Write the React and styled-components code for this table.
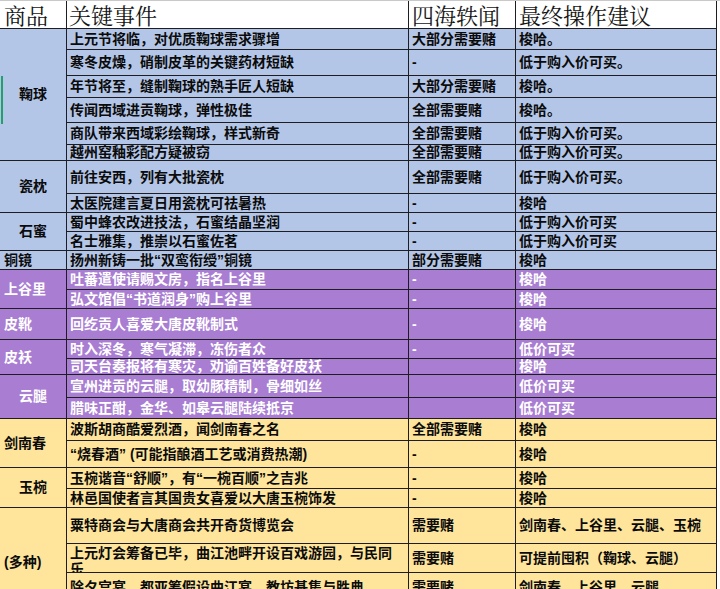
import React from "react";
import styled, { createGlobalStyle } from "styled-components";

const GlobalStyle = createGlobalStyle`
  html, body {
    margin: 0;
    padding: 0;
    background: #ffffff;
    overflow: hidden;
  }
  body {
    font-family: "Liberation Sans", "Noto Sans CJK SC", sans-serif;
  }
`;

const tones = {
  blue: { bg: "#b4c6e7", fg: "#0b0b0b" },
  purple: { bg: "#a87dd2", fg: "#ffffff" },
  yellow: { bg: "#fee59b", fg: "#0b0b0b" },
};

// [事件, 轶闻, 建议, 行高, 排版]
const groups = [
  {
    name: "鞠球",
    tone: "blue",
    center: true,
    rows: [
      ["上元节将临，对优质鞠球需求骤增", "大部分需要赌", "梭哈。", 21],
      ["寒冬皮燥，硝制皮革的关键药材短缺", "-", "低于购入价可买。", 26],
      ["年节将至，缝制鞠球的熟手匠人短缺", "大部分需要赌", "梭哈。", 22],
      ["传闻西域进贡鞠球，弹性极佳", "全部需要赌", "梭哈。", 25],
      ["商队带来西域彩绘鞠球，样式新奇", "全部需要赌", "低于购入价可买。", 22],
      ["越州窑釉彩配方疑被窃", "全部需要赌", "低于购入价可买。", 16],
    ],
  },
  {
    name: "瓷枕",
    tone: "blue",
    center: true,
    rows: [
      ["前往安西，列有大批瓷枕", "全部需要赌", "低于购入价可买。", 33],
      ["太医院建言夏日用瓷枕可祛暑热", "-", "梭哈", 19],
    ],
  },
  {
    name: "石蜜",
    tone: "blue",
    center: true,
    rows: [
      ["蜀中蜂农改进技法，石蜜结晶坚润", "-", "低于购入价可买", 19],
      ["名士雅集，推崇以石蜜佐茗", "-", "低于购入价可买", 19],
    ],
  },
  {
    name: "铜镜",
    tone: "blue",
    rows: [["扬州新铸一批“双鸾衔绶”铜镜", "部分需要赌", "梭哈", 19]],
  },
  {
    name: "上谷里",
    tone: "purple",
    rows: [
      ["吐蕃遣使请赐文房，指名上谷里", "-", "梭哈", 20],
      ["弘文馆倡“书道润身”购上谷里", "-", "梭哈", 19],
    ],
  },
  {
    name: "皮靴",
    tone: "purple",
    rows: [["回纥贡人喜爱大唐皮靴制式", "-", "梭哈", 31]],
  },
  {
    name: "皮袄",
    tone: "purple",
    rows: [
      ["时入深冬，寒气凝滞，冻伤者众", "-", "低价可买", 19],
      ["司天台奏报将有寒灾，劝谕百姓备好皮袄", "", "梭哈", 16],
    ],
  },
  {
    name: "云腿",
    tone: "purple",
    center: true,
    rows: [
      ["宣州进贡的云腿，取幼豚精制，骨细如丝", "", "低价可买", 23],
      ["腊味正酣，金华、如皋云腿陆续抵京", "", "低价可买", 21],
    ],
  },
  {
    name: "剑南春",
    tone: "yellow",
    rows: [
      ["波斯胡商酷爱烈酒，闻剑南春之名", "全部需要赌", "梭哈", 22],
      ["“烧春酒” (可能指酿酒工艺或消费热潮)", "-", "梭哈", 27],
    ],
  },
  {
    name: "玉椀",
    tone: "yellow",
    center: true,
    rows: [
      ["玉椀谐音“舒顺”，有“一椀百顺”之吉兆", "-", "梭哈", 21],
      ["林邑国使者言其国贵女喜爱以大唐玉椀饰发", "-", "梭哈", 19],
    ],
  },
  {
    name: "(多种)",
    tone: "yellow",
    rows: [
      ["粟特商会与大唐商会共开奇货博览会", "需要赌", "剑南春、上谷里、云腿、玉椀", 36],
      ["上元灯会筹备已毕，曲江池畔开设百戏游园，与民同乐", "需要赌", "可提前囤积（鞠球、云腿）", 29, "wrap"],
      ["除夕宫宴，都亚筹假设曲江宴，教坊基集与胜典", "需要赌", "剑南春、上谷里、云腿", 44, "top"],
    ],
  },
];

const Page = styled.div`
  position: relative;
  border-top: 1px solid #c9c9c9;
`;

const Sheet = styled.div`
  display: grid;
  grid-template-columns: 67px 342px 107px 201px;
  grid-template-rows: ${(p) => p.$rows};
  width: 717px;
`;

const Cell = styled.div`
  box-sizing: border-box;
  display: flex;
  align-items: ${(p) => (p.$mode === "wrap" || p.$mode === "top" ? "flex-start" : "center")};
  justify-content: ${(p) => (p.$center ? "center" : "flex-start")};
  padding: ${(p) => (p.$mode === "wrap" ? "1px 3px 0" : p.$mode === "top" ? "7px 3px 0" : "0 3px")};
  background: ${(p) => tones[p.$tone].bg};
  color: ${(p) => tones[p.$tone].fg};
  border-right: 1px solid #1d1d22;
  border-bottom: 1px solid #1d1d22;
  font-size: 14px;
  font-weight: 700;
  line-height: ${(p) => (p.$mode === "wrap" ? "16px" : "15px")};
  white-space: ${(p) => (p.$mode === "wrap" ? "normal" : "nowrap")};
  overflow: hidden;
`;

const GroupCell = styled(Cell)`
  grid-column: 1;
  grid-row: span ${(p) => p.$span};
  padding: ${(p) => (p.$center ? "0" : "0 4px")};
`;

const HeadCell = styled.div`
  box-sizing: border-box;
  display: flex;
  align-items: center;
  padding: 0 ${(p) => p.$pad}px;
  background: #ffffff;
  color: #141414;
  border-right: 1px solid #1d1d22;
  border-bottom: 1px solid #1d1d22;
  font-family: "Noto Serif CJK SC", "Noto Sans CJK SC", serif;
  font-size: 22px;
  font-weight: 400;
  line-height: 26px;
  white-space: nowrap;
`;

const SelectBar = styled.div`
  position: absolute;
  left: 1px;
  top: 75px;
  width: 2px;
  height: 48px;
  background: #21a06a;
`;

export default function App() {
  const heights = groups.flatMap((g) => g.rows.map((r) => `${r[3]}px`));
  const rowTemplate = ["28px", ...heights].join(" ");

  return (
    <>
      <GlobalStyle />
      <Page>
        <Sheet $rows={rowTemplate}>
          <HeadCell $pad={4}>商品</HeadCell>
          <HeadCell $pad={2}>关键事件</HeadCell>
          <HeadCell $pad={3}>四海轶闻</HeadCell>
          <HeadCell $pad={3}>最终操作建议</HeadCell>
          {groups.map((g) => (
            <React.Fragment key={g.name}>
              <GroupCell $tone={g.tone} $span={g.rows.length} $center={g.center}>
                {g.name}
              </GroupCell>
              {g.rows.map(([event, rumor, advice, , mode]) => (
                <React.Fragment key={event}>
                  <Cell $tone={g.tone} $mode={mode}>{event}</Cell>
                  <Cell $tone={g.tone} $mode={mode === "top" ? "top" : undefined}>{rumor}</Cell>
                  <Cell $tone={g.tone} $mode={mode === "top" ? "top" : undefined}>{advice}</Cell>
                </React.Fragment>
              ))}
            </React.Fragment>
          ))}
        </Sheet>
        <SelectBar />
      </Page>
    </>
  );
}
